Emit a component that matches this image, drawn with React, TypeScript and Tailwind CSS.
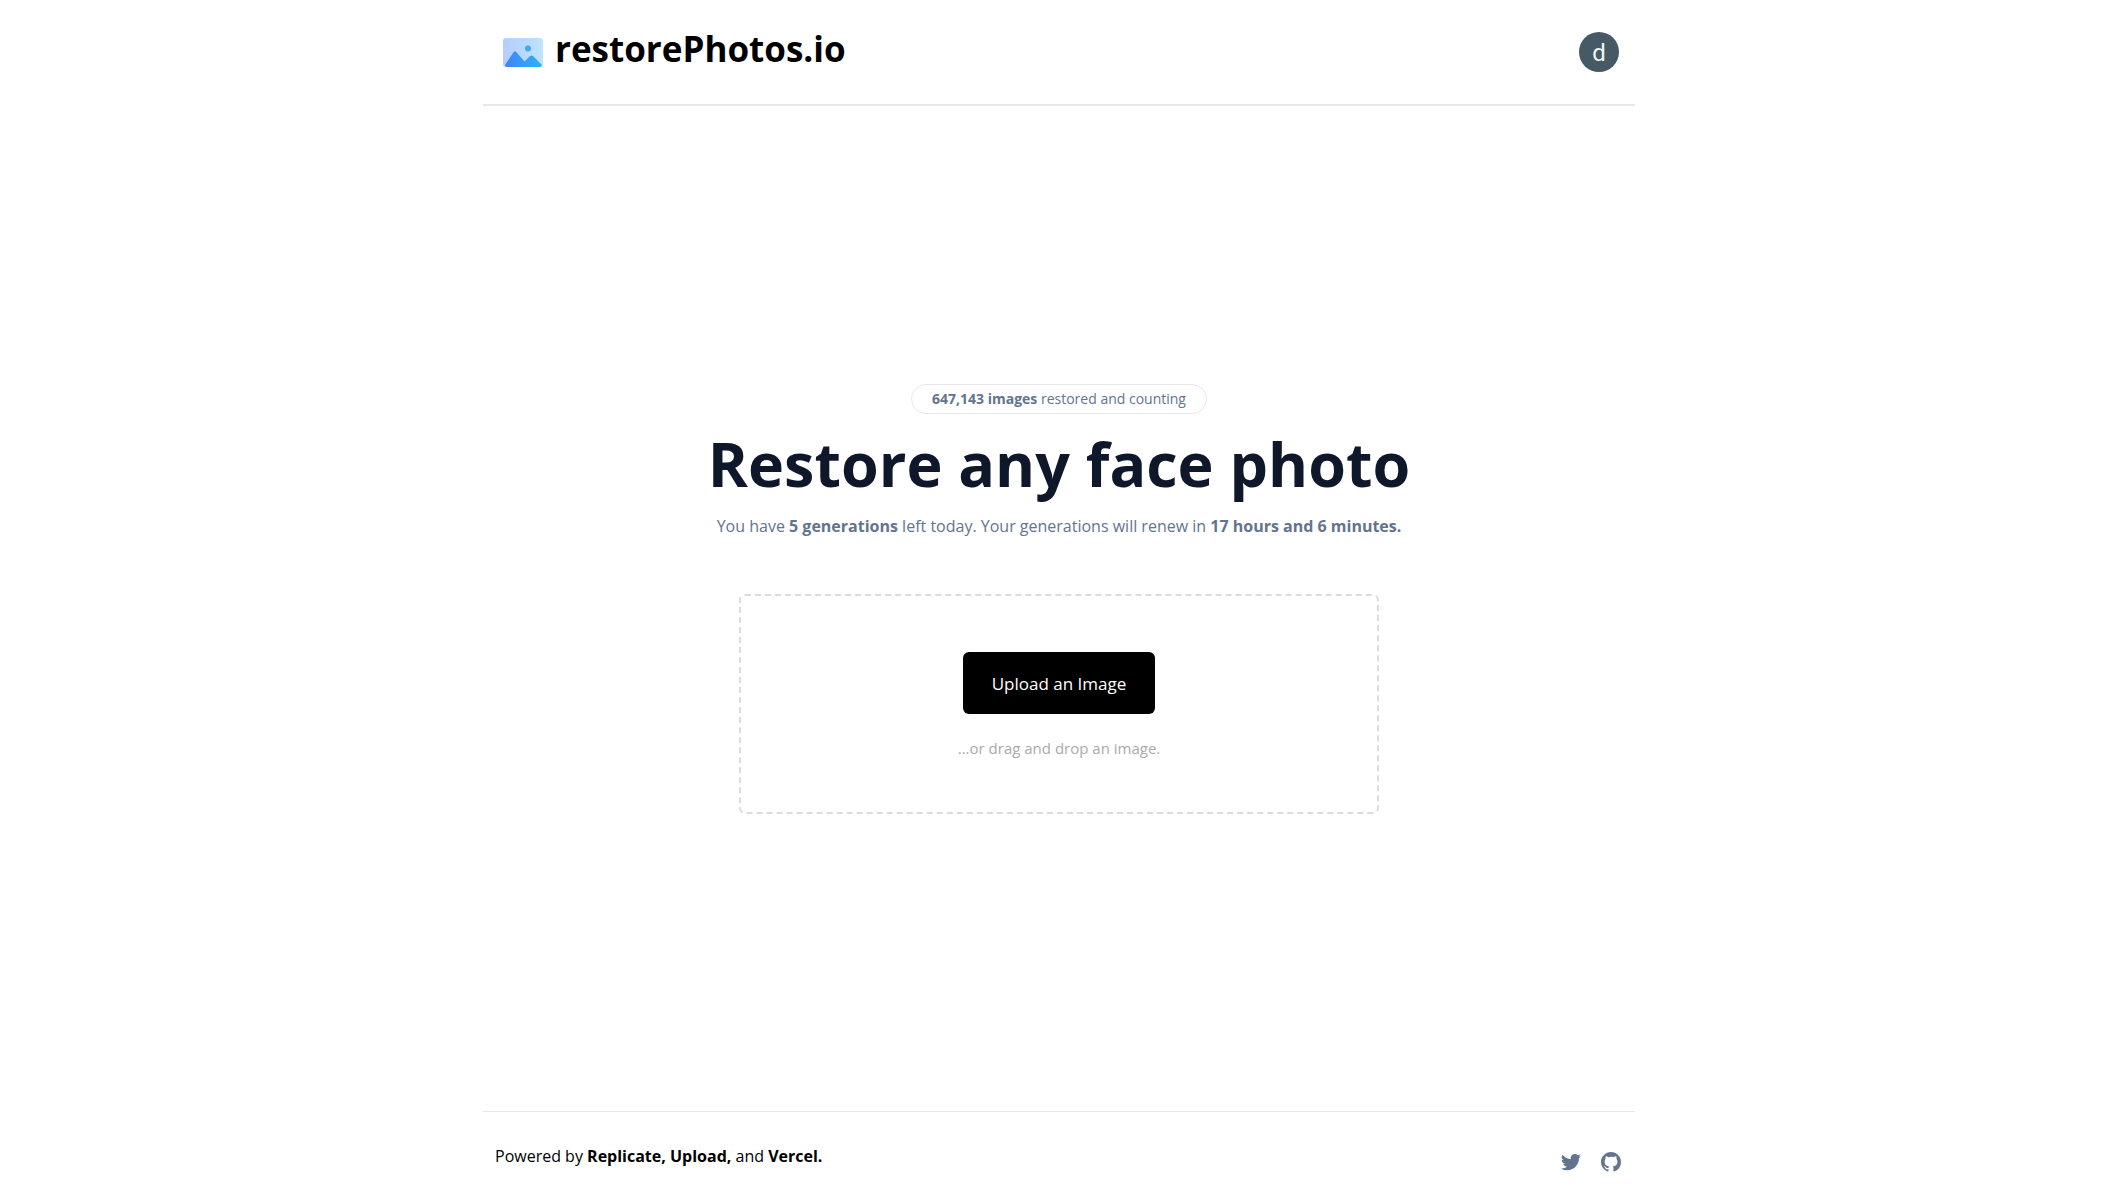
import React from "react";

function Logo() {
  return (
    <svg viewBox="0 0 40 29" className="h-[29px] w-10" aria-hidden="true">
      <defs>
        <linearGradient id="sky" x1="0" y1="0" x2="1" y2="0">
          <stop offset="0" stopColor="#b4ceff" />
          <stop offset="1" stopColor="#bde4ff" />
        </linearGradient>
        <linearGradient id="hill" x1="0" y1="0" x2="1" y2="0">
          <stop offset="0" stopColor="#3f86f6" />
          <stop offset="1" stopColor="#2ab2fc" />
        </linearGradient>
      </defs>
      <rect width="40" height="29" rx="3" fill="url(#sky)" />
      <path
        d="M2 27 L10.500 14.200 Q12 12.500 13.500 14.200 L21.500 23.500 L27 18 Q28.500 16.800 30 18 L39 27 Q38.500 29 36.500 29 H4 Q2 29 2 27 Z"
        fill="url(#hill)"
      />
      <circle cx="25" cy="10.500" r="3" fill="#45a4fa" />
    </svg>
  );
}

function TwitterIcon() {
  return (
    <svg viewBox="0 0 24 24" className="size-6" fill="currentColor" aria-hidden="true">
      <path d="M8.29 20.251c7.547 0 11.675-6.253 11.675-11.675 0-.178 0-.355-.012-.53A8.348 8.348 0 0022 5.92a8.19 8.19 0 01-2.357.646 4.118 4.118 0 001.804-2.27 8.224 8.224 0 01-2.605.996 4.107 4.107 0 00-6.993 3.743 11.65 11.65 0 01-8.457-4.287 4.106 4.106 0 001.27 5.477A4.072 4.072 0 012.8 9.713v.052a4.105 4.105 0 003.292 4.022 4.095 4.095 0 01-1.853.07 4.108 4.108 0 003.834 2.85A8.233 8.233 0 012 18.407a11.616 11.616 0 006.29 1.84" />
    </svg>
  );
}

function GitHubIcon() {
  return (
    <svg viewBox="0 0 24 24" className="size-6" fill="currentColor" aria-hidden="true">
      <path d="M12 2C6.477 2 2 6.484 2 12.017c0 4.425 2.865 8.18 6.839 9.504.5.092.682-.217.682-.483 0-.237-.008-.868-.013-1.703-2.782.605-3.369-1.343-3.369-1.343-.454-1.158-1.11-1.466-1.11-1.466-.908-.62.069-.608.069-.608 1.003.07 1.531 1.032 1.531 1.032.892 1.53 2.341 1.088 2.91.832.092-.647.35-1.088.636-1.338-2.22-.253-4.555-1.113-4.555-4.951 0-1.093.39-1.988 1.029-2.688-.103-.253-.446-1.272.098-2.65 0 0 .84-.27 2.75 1.026A9.564 9.564 0 0112 6.844c.85.004 1.705.115 2.504.337 1.909-1.296 2.747-1.027 2.747-1.027.546 1.379.202 2.398.1 2.651.64.7 1.028 1.595 1.028 2.688 0 3.848-2.339 4.695-4.566 4.943.359.309.678.92.678 1.855 0 1.338-.012 2.419-.012 2.747 0 .268.18.58.688.482A10.019 10.019 0 0022 12.017C22 6.484 17.522 2 12 2z" />
    </svg>
  );
}

function Header() {
  return (
    <header className="flex w-full items-center justify-between border-b-2 border-gray-200 px-4 py-8">
      <a href="#home" className="flex items-center gap-3 pl-1">
        <Logo />
        <h1 className="-mt-1.5 text-[35px] leading-10 font-bold">restorePhotos.io</h1>
      </a>
      <button
        className="size-10 rounded-full bg-[#455a64] pt-0.5 font-['Roboto',sans-serif] text-2xl text-gray-100"
        aria-label="Account"
      >
        d
      </button>
    </header>
  );
}

function Footer() {
  return (
    <footer className="flex w-full items-start justify-between border-t border-gray-200 px-3 pt-8 pb-[25px]">
      <p className="leading-6">
        Powered by{" "}
        <a href="#replicate" className="font-bold">Replicate, </a>
        <a href="#upload" className="font-bold">Upload, </a>
        and <a href="#vercel" className="font-bold">Vercel.</a>
      </p>
      <div className="flex items-center gap-4 pt-1.5 text-slate-500">
        <a href="#twitter" aria-label="Twitter">
          <TwitterIcon />
        </a>
        <a href="#github" aria-label="GitHub">
          <GitHubIcon />
        </a>
      </div>
    </footer>
  );
}

export default function App() {
  return (
    <div className="mx-auto flex min-h-screen max-w-6xl flex-col items-center font-['Open_Sans',sans-serif] text-black">
      <Header />
      <main className="flex w-full flex-1 flex-col items-center justify-center px-4 pb-5">
        <a
          href="#stats"
          className="mb-5 rounded-2xl border border-gray-200 px-5 py-1 text-sm text-slate-500"
        >
          <b>647,143 images</b> restored and counting
        </a>
        <h2 className="text-center text-[61px] leading-[60px] font-bold text-slate-900">
          Restore any face photo
        </h2>
        <p className="mt-5 text-center text-base text-slate-500">
          You have <b>5 generations</b> left today. Your generations will renew in{" "}
          <b>17 hours and 6 minutes.</b>
        </p>
        <section
          aria-label="Photo upload"
          className="mt-14 flex w-full max-w-[640px] flex-col items-center rounded-md border-2 border-dashed border-[#dcdcdc] pt-14 pb-[52px]"
        >
          <button className="rounded-md bg-black px-[29px] pt-5 pb-[18px] text-[17px] leading-6 text-white">
            Upload an Image
          </button>
          <p className="mt-[22px] text-[15px] leading-6 text-[#aaa]">...or drag and drop an image.</p>
        </section>
      </main>
      <Footer />
    </div>
  );
}
